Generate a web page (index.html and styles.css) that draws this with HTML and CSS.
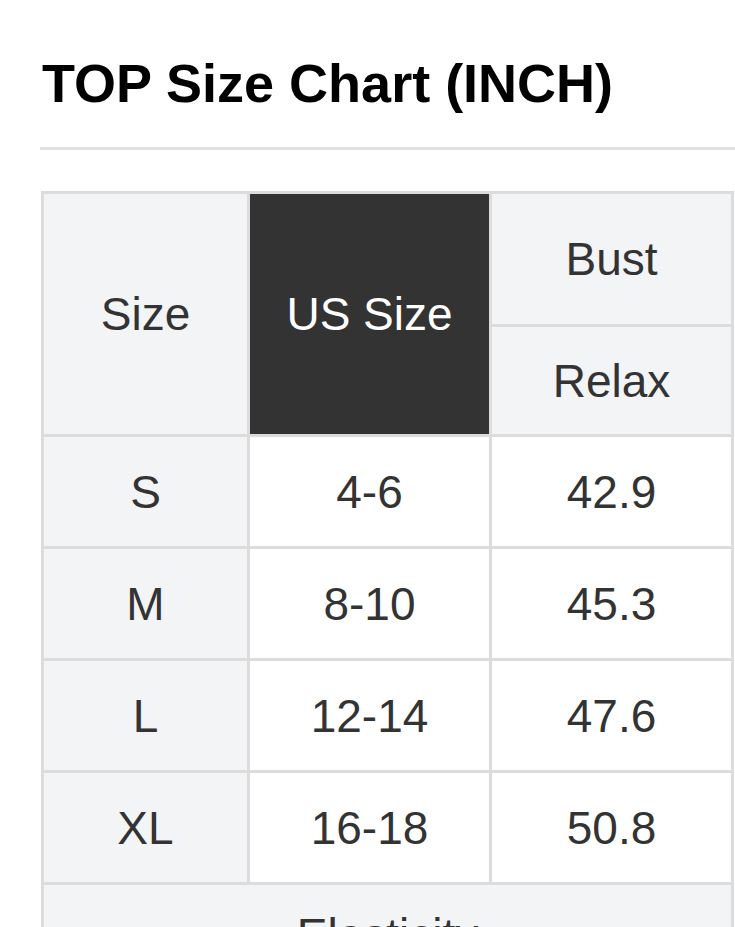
FILE: index.html
```html
<!DOCTYPE html>
<html lang="en">
<head>
<meta charset="utf-8">
<title>TOP Size Chart</title>
<link rel="stylesheet" href="styles.css">
</head>
<body>
<div class="page">
  <h1 class="title">TOP Size Chart (INCH)</h1>
  <div class="divider"></div>
  <table class="chart">
    <colgroup>
      <col class="c1"><col class="c2"><col class="c3">
    </colgroup>
    <tr class="h1">
      <th rowspan="2" class="head">Size</th>
      <th rowspan="2" class="head dark">US Size</th>
      <th class="head">Bust</th>
    </tr>
    <tr class="h2">
      <th class="head">Relax</th>
    </tr>
    <tr class="row"><td class="first">S</td><td>4-6</td><td>42.9</td></tr>
    <tr class="row"><td class="first">M</td><td>8-10</td><td>45.3</td></tr>
    <tr class="row"><td class="first">L</td><td>12-14</td><td>47.6</td></tr>
    <tr class="row"><td class="first">XL</td><td>16-18</td><td>50.8</td></tr>
    <tr class="row last"><td colspan="3" class="first">Elasticity</td></tr>
  </table>
</div>
</body>
</html>
```
FILE: styles.css
```css
html, body {
  margin: 0;
  padding: 0;
  background: #fff;
  overflow: hidden;
}
.page {
  padding: 51px 0 0 40px;
  font-family: "Liberation Sans", Arial, sans-serif;
}
.title {
  margin: 0 0 0 2px;
  font-size: 54px;
  line-height: 64px;
  font-weight: bold;
  color: #000;
}
.divider {
  margin-top: 32px;
  height: 3px;
  background: #e0e0e0;
}
.chart {
  margin: 41px 0 0 1px;
  width: 693px;
  table-layout: fixed;
  border-collapse: separate;
  border-spacing: 3px;
  background: #dcdcdc;
  color: #333;
  font-size: 46px;
}
.c1 { width: 203px; }
.c2 { width: 239px; }
.c3 { width: 239px; }
.chart th, .chart td {
  padding: 0;
  text-align: center;
  vertical-align: middle;
  font-weight: normal;
  background: #fff;
}
.chart .head { background: #f3f4f6; }
.chart .head.dark { background: #333; color: #fff; }
.h1 th { height: 130px; }
.h2 th { height: 107px; }
.row td { height: 109px; }
.chart .first { background: #f3f4f6; }
.row.last td { height: 100px; }
```
